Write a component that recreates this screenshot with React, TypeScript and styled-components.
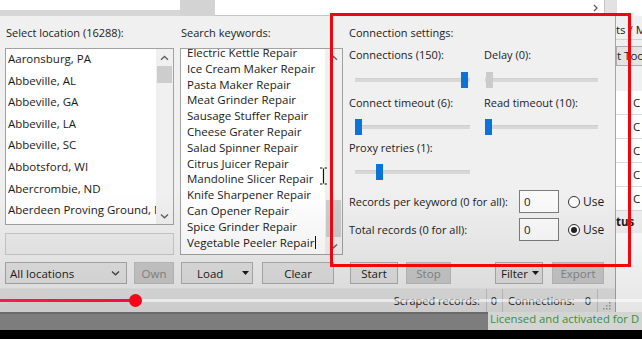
import React from 'react';
import styled, { createGlobalStyle } from 'styled-components';

const GlobalStyle = createGlobalStyle`
  html, body {
    margin: 0;
    padding: 0;
    background: #000;
  }
  body {
    font-family: 'Open Sans', 'Noto Sans', sans-serif;
  }
`;

const locations = [
  'Aaronsburg, PA',
  'Abbeville, AL',
  'Abbeville, GA',
  'Abbeville, LA',
  'Abbeville, SC',
  'Abbotsford, WI',
  'Abercrombie, ND',
  'Aberdeen Proving Ground, MD',
];

const keywords = [
  'Electric Kettle Repair',
  'Ice Cream Maker Repair',
  'Pasta Maker Repair',
  'Meat Grinder Repair',
  'Sausage Stuffer Repair',
  'Cheese Grater Repair',
  'Salad Spinner Repair',
  'Citrus Juicer Repair',
  'Mandoline Slicer Repair',
  'Knife Sharpener Repair',
  'Can Opener Repair',
  'Spice Grinder Repair',
  'Vegetable Peeler Repair',
];

const Frame = styled.div`
  position: relative;
  width: 642px;
  height: 339px;
  overflow: hidden;
  display: flex;
  flex-direction: column;
  background: #000;
  font-family: 'Open Sans', 'Noto Sans', sans-serif;
  font-size: 11px;
  color: #1c1c1c;
`;

/* top strip: edges of the windows behind */
const TopStrip = styled.div`
  height: 16px;
  flex-shrink: 0;
  display: flex;
`;

const TopLeft = styled.div`
  width: 180px;
  background: linear-gradient(to bottom, #fff 0, #fff 10px, #d6d6d6 10px);
`;

const TopTab = styled.div`
  width: 35px;
  background: #d3d3d3;
`;

const TopField = styled.div`
  width: 390px;
  box-sizing: border-box;
  background: #fff;
  border-bottom: 1px solid #c6c6c6;
  border-right: 1px solid #c6c6c6;
  display: flex;
  align-items: center;
  justify-content: flex-end;
  padding-right: 6px;
`;

const TopGap = styled.div`
  width: 12px;
  background: #e2e2e2;
`;

const TopEnd = styled.div`
  flex: 1;
  background: #fff;
`;

const Main = styled.div`
  height: 296px;
  flex-shrink: 0;
  display: flex;
`;

const Dialog = styled.div`
  width: 616px;
  box-sizing: border-box;
  flex-shrink: 0;
  display: flex;
  flex-direction: column;
  background: #f0f0f0;
  border-right: 1px solid #a6a6a6;
`;

const Body = styled.div`
  height: 272px;
  box-sizing: border-box;
  display: flex;
  gap: 6px;
  padding: 9px 10px 4px 5px;
`;

const Column = styled.div<{ $width: number }>`
  width: ${(p) => p.$width}px;
  flex-shrink: 0;
  display: flex;
  flex-direction: column;
`;

const FieldLabel = styled.div<{ $indent?: number }>`
  height: 16px;
  line-height: 16px;
  white-space: nowrap;
  padding-left: ${(p) => p.$indent ?? 0}px;
`;

const ListBox = styled.div`
  flex: 1;
  min-height: 0;
  margin-top: 7px;
  display: flex;
  background: #fff;
  border: 1px solid #a2a2a2;
  overflow: hidden;
`;

const ListItems = styled.div<{ $indent: number; $offset: number }>`
  position: relative;
  flex: 1;
  min-width: 0;
  overflow: hidden;
  padding-left: ${(p) => p.$indent}px;

  & > :first-child {
    margin-top: ${(p) => p.$offset}px;
  }
`;

const ListRow = styled.div<{ $height: number }>`
  height: ${(p) => p.$height}px;
  line-height: ${(p) => p.$height}px;
  font-size: 11.5px;
  white-space: nowrap;
  color: #1a1a1a;
`;

const Caret = styled.span`
  display: inline-block;
  width: 1px;
  height: 13px;
  margin-left: 1px;
  vertical-align: -2px;
  background: #111;
`;

const ScrollBar = styled.div`
  width: 17px;
  flex-shrink: 0;
  display: flex;
  flex-direction: column;
  background: #f0f0f0;
`;

const ScrollArrow = styled.div`
  height: 17px;
  flex-shrink: 0;
  display: flex;
  align-items: center;
  justify-content: center;
`;

const ScrollTrack = styled.div`
  flex: 1;
  display: flex;
  flex-direction: column;
  padding: 0 1px;
`;

const ScrollThumb = styled.div<{ $offset: number; $size: number }>`
  margin-top: ${(p) => p.$offset}px;
  height: ${(p) => p.$size}px;
  background: #cdcdcd;
`;

const TextInput = styled.div`
  height: 22px;
  box-sizing: border-box;
  margin-top: 8px;
  background: #ececec;
  border: 1px solid #c9c9c9;
`;

const ButtonRow = styled.div<{ $gap: number }>`
  height: 22px;
  margin-top: 7px;
  display: flex;
  gap: ${(p) => p.$gap}px;
`;

const Button = styled.div<{ $width: number; $disabled?: boolean; $push?: number }>`
  width: ${(p) => p.$width}px;
  height: 22px;
  box-sizing: border-box;
  margin-left: ${(p) => p.$push ?? 0}px;
  display: flex;
  align-items: center;
  justify-content: center;
  font-size: 11.5px;
  background: ${(p) => (p.$disabled ? '#cacaca' : '#e1e1e1')};
  border: 1px solid ${(p) => (p.$disabled ? '#bdbdbd' : '#adadad')};
  color: ${(p) => (p.$disabled ? '#878787' : '#1a1a1a')};
`;

const SplitButton = styled(Button)`
  justify-content: space-between;
  padding: 0 3px 0 ${(p) => (p.$width > 60 ? 15 : 5)}px;
`;

const Combo = styled.div`
  width: 122px;
  height: 22px;
  box-sizing: border-box;
  display: flex;
  align-items: center;
  justify-content: space-between;
  padding: 0 6px 0 4px;
  font-size: 11.5px;
  background: #e3e3e3;
  border: 1px solid #a9a9a9;
`;

/* connection settings */
const PairRow = styled.div<{ $top: number }>`
  margin-top: ${(p) => p.$top}px;
  display: grid;
  grid-template-columns: 135px 1fr;
`;

const Cell = styled.div`
  display: flex;
  flex-direction: column;
`;

const SliderBox = styled.div<{ $width: number; $indent: number; $top: number }>`
  position: relative;
  width: ${(p) => p.$width}px;
  height: 16px;
  margin-left: ${(p) => p.$indent}px;
  margin-top: ${(p) => p.$top}px;
  display: flex;
  align-items: center;
`;

const SliderTrack = styled.div`
  flex: 1;
  height: 3px;
  background: #d8d8d8;
  border-top: 1px solid #cfcfcf;
`;

const SliderThumb = styled.div<{ $disabled?: boolean }>`
  position: absolute;
  top: 0;
  width: 7px;
  height: 16px;
  background: ${(p) => (p.$disabled ? '#cbcbcb' : '#0a74d6')};
`;

const RecordRow = styled.div<{ $top: number }>`
  height: 23px;
  margin-top: ${(p) => p.$top}px;
  display: flex;
  align-items: center;
`;

const RecordLabel = styled.div`
  width: 170px;
  white-space: nowrap;
`;

const NumberBox = styled.div`
  width: 40px;
  height: 23px;
  box-sizing: border-box;
  padding-left: 4px;
  line-height: 21px;
  font-size: 11.5px;
  background: #fbfbfb;
  border: 1px solid #7c7c7c;
`;

const Radio = styled.span<{ $checked?: boolean }>`
  width: 12px;
  height: 12px;
  margin-left: 9px;
  box-sizing: border-box;
  border: 1px solid #333;
  border-radius: 50%;
  background: #fff;
  display: inline-flex;
  align-items: center;
  justify-content: center;

  &::after {
    content: '';
    width: 6px;
    height: 6px;
    border-radius: 50%;
    background: ${(p) => (p.$checked ? '#222' : 'transparent')};
  }
`;

const RadioText = styled.span`
  margin-left: 3px;
  font-size: 12px;
`;

const Spacer = styled.div`
  flex: 1;
`;

/* status bar */
const StatusBar = styled.div`
  height: 24px;
  display: flex;
  align-items: stretch;
  justify-content: flex-end;
  background: #e3e3e3;
  border-top: 1px solid #e9e9e9;
  font-size: 11px;
`;

const StatusPanel = styled.div<{ $width?: number; $align: string }>`
  ${(p) => (p.$width ? `width: ${p.$width}px;` : '')}
  box-sizing: border-box;
  display: flex;
  align-items: center;
  justify-content: ${(p) => p.$align};
  padding: 0 6px 0 5px;
  border-right: 1px solid #c2c2c2;
  white-space: nowrap;
`;

const Grip = styled.div`
  width: 17px;
  display: flex;
  align-items: flex-end;
  justify-content: center;
  padding-bottom: 2px;
  box-sizing: border-box;
`;

/* window behind the dialog */
const BackWindow = styled.div`
  flex: 1;
  min-width: 0;
  display: flex;
  flex-direction: column;
  background: #f0f0f0;
  overflow: hidden;
  font-size: 11.5px;
  white-space: nowrap;
`;

const BackTitle = styled.div`
  height: 24px;
  box-sizing: border-box;
  padding-top: 4px;
  line-height: 20px;
  border-bottom: 1px solid #d2d2d2;
`;

const BackTool = styled.div`
  height: 20px;
  box-sizing: border-box;
  margin-top: 6px;
  line-height: 18px;
  background: #e4e4e4;
  border: 1px solid #adadad;
  border-right: none;
`;

const BackGrid = styled.div`
  margin-top: 25px;
  display: flex;
  flex-direction: column;
`;

const BackRow = styled.div`
  height: 24px;
  box-sizing: border-box;
  line-height: 23px;
  padding-left: 17px;
  background: #fff;
  border-bottom: 1px solid #dadada;
`;

const BackHeader = styled.div`
  height: 22px;
  line-height: 22px;
  font-weight: 700;
`;

const BackFill = styled.div`
  flex: 1;
  background: #fff;
`;

/* bottom of the video frame */
const LowerBand = styled.div`
  height: 18px;
  flex-shrink: 0;
  display: flex;
`;

const LowerDark = styled.div`
  width: 488px;
  background: #7d7d7d;
  border-top: 2px solid #6a6a6a;
  box-sizing: border-box;
`;

const License = styled.div`
  flex: 1;
  background: #d3d5d3;
  color: #3b8d3b;
  font-size: 11.3px;
  line-height: 13px;
  padding-left: 2px;
  white-space: nowrap;
  overflow: hidden;
`;

const BlackBand = styled.div`
  flex: 1;
  background: #000;
`;

/* overlays drawn by the video */
const Shade = styled.div`
  position: absolute;
  left: 0;
  right: 0;
  top: 190px;
  height: 122px;
  background: linear-gradient(to bottom, rgba(0, 0, 0, 0), rgba(0, 0, 0, 0.1));
  pointer-events: none;
`;

const RedBox = styled.div`
  position: absolute;
  left: 330px;
  top: 13px;
  width: 301px;
  height: 254px;
  box-sizing: border-box;
  border: 3px solid #f2050b;
`;

const Timeline = styled.div`
  position: absolute;
  left: 0;
  right: 0;
  top: 299px;
  height: 3px;
  background: rgba(255, 255, 255, 0.55);
  display: flex;
`;

const Played = styled.div`
  height: 3px;
  background: linear-gradient(to right, #ff1a4f, #ff0a3a);
`;

const PlayHead = styled.div`
  position: absolute;
  top: -5px;
  width: 13px;
  height: 13px;
  border-radius: 50%;
  background: #ff0018;
`;

const Cursor = styled.svg`
  position: absolute;
  left: 319px;
  top: 167px;
`;

const Chevron: React.FC<{ down?: boolean; color?: string }> = ({ down, color = '#606060' }) => (
  <svg width="9" height="6" viewBox="0 0 9 6">
    <polyline
      points={down ? '1,1.5 4.5,4.8 8,1.5' : '1,4.8 4.5,1.5 8,4.8'}
      fill="none"
      stroke={color}
      strokeWidth="1.4"
    />
  </svg>
);

const DropArrow: React.FC = () => (
  <svg width="7" height="4" viewBox="0 0 7 4">
    <polygon points="0,0 7,0 3.5,4" fill="#1a1a1a" />
  </svg>
);

const Scroll: React.FC<{ offset: number; size: number }> = ({ offset, size }) => (
  <ScrollBar>
    <ScrollArrow>
      <Chevron />
    </ScrollArrow>
    <ScrollTrack>
      <ScrollThumb $offset={offset} $size={size} />
    </ScrollTrack>
    <ScrollArrow>
      <Chevron down />
    </ScrollArrow>
  </ScrollBar>
);

const Slider: React.FC<{ width: number; indent: number; top: number; value: number; disabled?: boolean }> = ({
  width,
  indent,
  top,
  value,
  disabled,
}) => (
  <SliderBox $width={width} $indent={indent} $top={top}>
    <SliderTrack />
    <SliderThumb $disabled={disabled} style={{ left: Math.round(value * (width - 7)) }} />
  </SliderBox>
);

const App: React.FC = () => {
  return (
    <Frame>
      <GlobalStyle />
      <TopStrip>
        <TopLeft />
        <TopTab />
        <TopField>
          <svg width="5" height="8" viewBox="0 0 5 8">
            <polyline points="1,1 4,4 1,7" fill="none" stroke="#555" strokeWidth="1.2" />
          </svg>
        </TopField>
        <TopGap />
        <TopEnd />
      </TopStrip>

      <Main>
        <Dialog>
          <Body>
            <Column $width={169}>
              <FieldLabel $indent={1}>Select location (16288):</FieldLabel>
              <ListBox>
                <ListItems $indent={2} $offset={-1}>
                  {locations.map((loc) => (
                    <ListRow key={loc} $height={21.6}>
                      {loc}
                    </ListRow>
                  ))}
                </ListItems>
                <Scroll offset={0} size={17} />
              </ListBox>
              <TextInput />
              <ButtonRow $gap={7}>
                <Combo>
                  All locations
                  <Chevron down color="#444" />
                </Combo>
                <Button $width={40} $disabled>
                  Own
                </Button>
              </ButtonRow>
            </Column>

            <Column $width={163}>
              <FieldLabel $indent={1}>Search keywords:</FieldLabel>
              <ListBox>
                <ListItems $indent={6} $offset={-4}>
                  {keywords.map((kw, i) => (
                    <ListRow key={kw} $height={15.8}>
                      {kw}
                      {i === keywords.length - 1 && <Caret />}
                    </ListRow>
                  ))}
                </ListItems>
                <Scroll offset={134} size={37} />
              </ListBox>
              <ButtonRow $gap={9}>
                <SplitButton $width={72} $push={1}>
                  Load
                  <DropArrow />
                </SplitButton>
                <Button $width={72}>Clear</Button>
              </ButtonRow>
            </Column>

            <Column $width={256}>
              <FieldLabel>Connection settings:</FieldLabel>
              <PairRow $top={6}>
                <Cell>
                  <FieldLabel>Connections (150):</FieldLabel>
                  <Slider width={115} indent={6} top={9} value={0.98} />
                </Cell>
                <Cell>
                  <FieldLabel>Delay (0):</FieldLabel>
                  <Slider width={113} indent={1} top={9} value={0.01} disabled />
                </Cell>
              </PairRow>
              <PairRow $top={7}>
                <Cell>
                  <FieldLabel>Connect timeout (6):</FieldLabel>
                  <Slider width={115} indent={6} top={8} value={0} />
                </Cell>
                <Cell>
                  <FieldLabel>Read timeout (10):</FieldLabel>
                  <Slider width={113} indent={1} top={8} value={0} />
                </Cell>
              </PairRow>
              <PairRow $top={5}>
                <Cell>
                  <FieldLabel>Proxy retries (1):</FieldLabel>
                  <Slider width={115} indent={6} top={8} value={0.195} />
                </Cell>
              </PairRow>
              <RecordRow $top={10}>
                <RecordLabel>Records per keyword (0 for all):</RecordLabel>
                <NumberBox>0</NumberBox>
                <Radio />
                <RadioText>Use</RadioText>
              </RecordRow>
              <RecordRow $top={5}>
                <RecordLabel>Total records (0 for all):</RecordLabel>
                <NumberBox>0</NumberBox>
                <Radio $checked />
                <RadioText>Use</RadioText>
              </RecordRow>
              <Spacer />
              <ButtonRow $gap={8}>
                <Button $width={48} $push={1}>
                  Start
                </Button>
                <Button $width={45} $disabled>
                  Stop
                </Button>
                <SplitButton $width={48} $push={36}>
                  Filter
                  <DropArrow />
                </SplitButton>
                <Button $width={52} $disabled $push={1}>
                  Export
                </Button>
              </ButtonRow>
            </Column>
          </Body>

          <StatusBar>
            <StatusPanel $align="flex-end">Scraped records:</StatusPanel>
            <StatusPanel $width={16} $align="center">
              0
            </StatusPanel>
            <StatusPanel $width={95} $align="space-between">
              <span>Connections:</span>
              <span>0</span>
            </StatusPanel>
            <Grip>
              <svg width="9" height="9" viewBox="0 0 9 9">
                {[
                  [7, 1],
                  [4, 4],
                  [7, 4],
                  [1, 7],
                  [4, 7],
                  [7, 7],
                ].map(([x, y]) => (
                  <rect key={`${x}-${y}`} x={x} y={y} width="1.5" height="1.5" fill="#9a9a9a" />
                ))}
              </svg>
            </Grip>
          </StatusBar>
        </Dialog>

        <BackWindow>
          <BackTitle>ts / M</BackTitle>
          <BackTool>t Too</BackTool>
          <BackGrid>
            {[0, 1, 2, 3, 4].map((n) => (
              <BackRow key={n}>C</BackRow>
            ))}
          </BackGrid>
          <BackHeader>tus</BackHeader>
          <BackFill />
        </BackWindow>
      </Main>

      <LowerBand>
        <LowerDark />
        <License>Licensed and activated for D</License>
      </LowerBand>
      <BlackBand />

      <Shade />
      <RedBox />
      <Timeline>
        <Played style={{ width: 135 }} />
        <PlayHead style={{ left: 129 }} />
      </Timeline>
      <Cursor width="9" height="18" viewBox="0 0 9 18">
        <path d="M1 1h2.5M5.5 1H8M4.5 1.5v15M1 17h2.5M5.5 17H8" stroke="#111" strokeWidth="1.2" fill="none" />
      </Cursor>
    </Frame>
  );
};

export default App;
